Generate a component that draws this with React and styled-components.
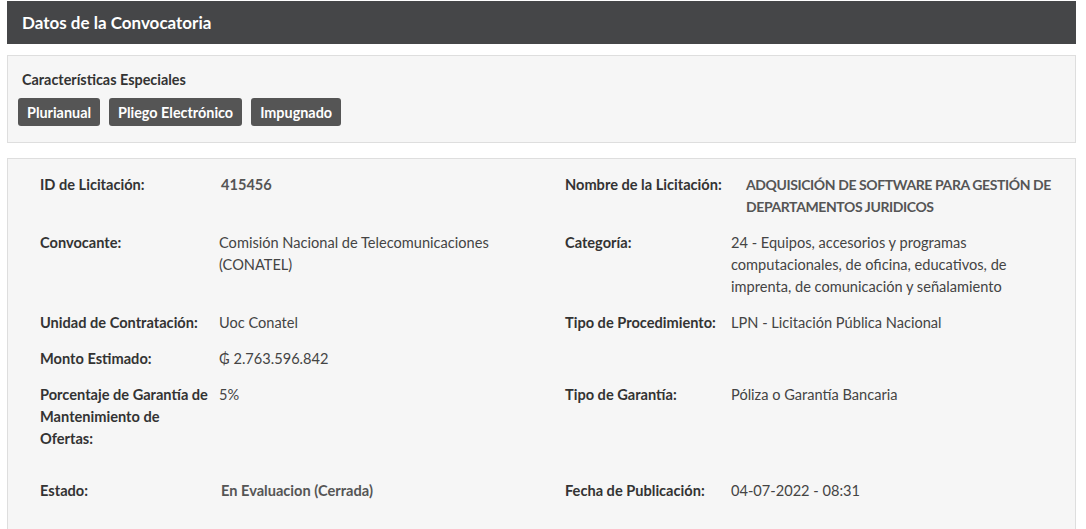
import styled, { createGlobalStyle } from "styled-components";

const GlobalStyle = createGlobalStyle`
  body {
    margin: 0;
    background: #fff;
    font-family: Lato, "Noto Sans", sans-serif;
    color: #333;
  }
`;

const Page = styled.div`
  padding: 1px 10px 0 7px;
`;

const Header = styled.div`
  height: 43px;
  background: #454648;
  color: #fff;
  display: flex;
  align-items: center;
  padding: 0 15px;
  font-size: 17px;
  font-weight: bold;
`;

const Panel = styled.div`
  background: #f6f6f6;
  border: 1px solid #dedede;
  margin-top: ${({ $top }) => $top};
  padding: ${({ $pad }) => $pad};
`;

const SectionLabel = styled.div`
  font-size: 14.4px;
  font-weight: bold;
  color: #333;
  padding-left: 4px;
  line-height: 18px;
`;

const BadgeRow = styled.div`
  display: flex;
  gap: 9px;
  margin-top: 9px;
`;

const Badge = styled.span`
  background: #555;
  color: #fff;
  font-size: 14.4px;
  font-weight: bold;
  height: 28px;
  padding: 0 9px;
  border-radius: 3px;
  display: inline-flex;
  align-items: center;
`;

const Grid = styled.div`
  display: grid;
  grid-template-columns: 179px 346px 166px 320px;
  row-gap: 14px;
  font-size: 14.6px;
  line-height: 22px;
`;

const Label = styled.div`
  font-weight: bold;
  color: #333;
  padding-right: 8px;
  margin-top: ${({ $extra }) => ($extra ? "16px" : "0")};
`;

const Value = styled.div`
  padding-right: 40px;
  padding-left: ${({ $indent }) => $indent || "0"};
  font-weight: ${({ $strong }) => ($strong ? "bold" : "normal")};
  color: ${({ $strong }) => ($strong ? "#555" : "#444")};
  margin-top: ${({ $extra }) => ($extra ? "16px" : "0")};
`;

const RightValue = styled(Value)`
  padding-right: 0;
`;

const TitleValue = styled(RightValue)`
  font-size: 14px;
  letter-spacing: -0.4px;
  margin-right: -12px;
`;

const rows = [
  {
    l1: "ID de Licitación:", v1: "415456", s1: true, i1: "2px",
    l2: "Nombre de la Licitación:", v2: "ADQUISICIÓN DE SOFTWARE PARA GESTIÓN DE DEPARTAMENTOS JURIDICOS", s2: true, i2: "15px", title: true,
  },
  {
    l1: "Convocante:", v1: "Comisión Nacional de Telecomunicaciones (CONATEL)",
    l2: "Categoría:", v2: "24 - Equipos, accesorios y programas computacionales, de oficina, educativos, de imprenta, de comunicación y señalamiento",
  },
  {
    l1: "Unidad de Contratación:", v1: "Uoc Conatel",
    l2: "Tipo de Procedimiento:", v2: "LPN - Licitación Pública Nacional",
  },
  { l1: "Monto Estimado:", v1: "₲ 2.763.596.842", l2: "", v2: "" },
  {
    l1: "Porcentaje de Garantía de Mantenimiento de Ofertas:", v1: "5%",
    l2: "Tipo de Garantía:", v2: "Póliza o Garantía Bancaria",
  },
  {
    l1: "Estado:", v1: "En Evaluacion (Cerrada)", s1: true, i1: "2px", extra: true,
    l2: "Fecha de Publicación:", v2: "04-07-2022 - 08:31",
  },
];

export default function App() {
  return (
    <Page>
      <GlobalStyle />
      <Header>Datos de la Convocatoria</Header>
      <Panel $top="11px" $pad="15px 10px 16px 10px">
        <SectionLabel>Características Especiales</SectionLabel>
        <BadgeRow>
          <Badge>Plurianual</Badge>
          <Badge>Pliego Electrónico</Badge>
          <Badge>Impugnado</Badge>
        </BadgeRow>
      </Panel>
      <Panel $top="15px" $pad="15px 24px 60px 32px">
        <Grid>
          {rows.map((r) => {
            const Right = r.title ? TitleValue : RightValue;
            return (
              <>
                <Label $extra={r.extra}>{r.l1}</Label>
                <Value $strong={r.s1} $indent={r.i1} $extra={r.extra}>{r.v1}</Value>
                <Label $extra={r.extra}>{r.l2}</Label>
                <Right $strong={r.s2} $indent={r.i2} $extra={r.extra}>{r.v2}</Right>
              </>
            );
          })}
        </Grid>
      </Panel>
    </Page>
  );
}
